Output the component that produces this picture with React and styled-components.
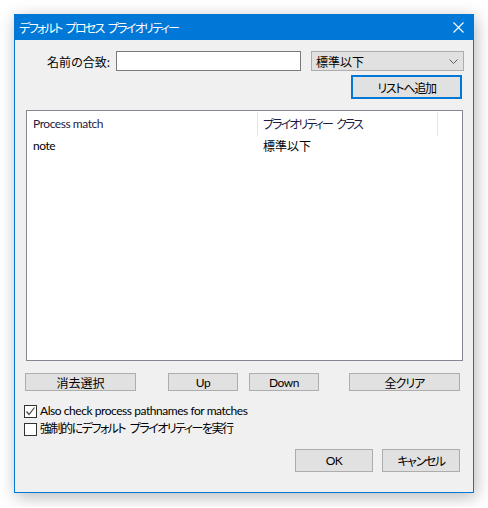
import styled, { createGlobalStyle } from "styled-components";

const GlobalStyle = createGlobalStyle`
  html, body {
    margin: 0;
    padding: 0;
    background: #ffffff;
  }
  body {
    padding: 14px;
    font-family: Lato, "Noto Sans CJK JP", sans-serif;
    font-size: 12px;
    font-feature-settings: "palt";
    color: #000000;
  }
`;

//styled-component
const Window = styled.div`
  width: 458px;
  height: 477px;
  border: 1px solid #0078d7;
  background: #f0f0f0;
  box-shadow: 2px 4px 16px rgba(0, 0, 0, 0.28);
  display: flex;
  flex-direction: column;
`;

const TitleBar = styled.div`
  height: 25px;
  background: #0078d7;
  color: #ffffff;
  display: flex;
  align-items: center;
  justify-content: space-between;
  padding: 0 9px 0 4px;
  font-family: "Noto Sans CJK JP", sans-serif;
`;

const Title = styled.span`
  line-height: 16px;
  margin-top: 1px;
  letter-spacing: -1.7px;
  word-spacing: 3px;
`;

const Body = styled.div`
  flex: 1;
  display: flex;
  flex-direction: column;
  padding: 11px 0 0 0;
`;

const Row = styled.div`
  display: flex;
  align-items: center;
  justify-content: ${(p) => p.$justify || "flex-start"};
  height: ${(p) => p.$h}px;
  margin-top: ${(p) => p.$mt || 0}px;
  padding: 0 ${(p) => p.$pr || 0}px 0 ${(p) => p.$pl || 0}px;
`;

const Latin = styled.span`
  letter-spacing: -0.45px;
`;

const Kana = styled.span`
  letter-spacing: ${(p) => p.$ls || -1.4}px;
  word-spacing: 3px;
`;

const Label = styled.span`
  margin-right: 6px;
  font-family: "Noto Sans CJK JP", sans-serif;
`;

const TextInput = styled.input`
  box-sizing: border-box;
  width: 185px;
  height: 20px;
  border: 1px solid #7a7a7a;
  background: #ffffff;
  outline: none;
  margin: 0 10px 0 0;
  padding: 0 3px;
  font: inherit;
`;

const Select = styled.div`
  box-sizing: border-box;
  width: 153px;
  height: 20px;
  border: 1px solid #adadad;
  background: #e1e1e1;
  display: flex;
  align-items: center;
  justify-content: space-between;
  padding: 0 5px 0 4px;
  font-family: "Noto Sans CJK JP", sans-serif;
`;

const Button = styled.div`
  box-sizing: border-box;
  width: ${(p) => p.$w}px;
  height: ${(p) => p.$h}px;
  margin-left: ${(p) => p.$ml || 0}px;
  border: ${(p) => (p.$focus ? "2px solid #0078d7" : "1px solid #adadad")};
  background: #e1e1e1;
  display: flex;
  align-items: center;
  justify-content: center;
`;

const ListView = styled.div`
  box-sizing: border-box;
  width: 437px;
  height: 251px;
  margin: 11px 0 0 11px;
  border: 1px solid #828790;
  background: #ffffff;
  display: flex;
  flex-direction: column;
`;

const ListRow = styled.div`
  display: flex;
  height: ${(p) => p.$h}px;
  align-items: center;
  color: ${(p) => (p.$header ? "#1c1c44" : "#000000")};
`;

const Cell = styled.div`
  box-sizing: border-box;
  width: ${(p) => p.$w}px;
  height: 100%;
  display: flex;
  align-items: center;
  padding-left: ${(p) => p.$pl}px;
  border-right: ${(p) => (p.$sep ? "1px solid #e5e5e5" : "none")};
  margin-top: ${(p) => (p.$sep ? 1 : 0)}px;
`;

const CheckRow = styled.label`
  display: flex;
  align-items: center;
  height: 13px;
  margin: ${(p) => p.$mt}px 0 0 9px;
`;

const Box = styled.span`
  box-sizing: border-box;
  width: 13px;
  height: 13px;
  border: 1px solid #333333;
  background: #ffffff;
  margin-right: 3px;
  display: flex;
  align-items: center;
  justify-content: center;
`;

const CheckText = styled.span`
  line-height: 13px;
  margin-top: -2px;
`;

function CloseIcon() {
  return (
    <svg width="11" height="11" viewBox="0 0 11 11">
      <path d="M0.5 0.5 L10.5 10.5 M10.5 0.5 L0.5 10.5" stroke="#ffffff" strokeWidth="1.1" />
    </svg>
  );
}

function Chevron() {
  return (
    <svg width="9" height="5" viewBox="0 0 9 5">
      <path d="M0.5 0.5 L4.5 4.5 L8.5 0.5" stroke="#606060" strokeWidth="1" fill="none" />
    </svg>
  );
}

function Check({ checked, children }) {
  return (
    <>
      <Box>
        {checked && (
          <svg width="11" height="11" viewBox="0 0 11 11">
            <path d="M1.5 5.5 L4 8.5 L9.5 1.5" stroke="#444444" strokeWidth="1.2" fill="none" />
          </svg>
        )}
      </Box>
      <CheckText>{children}</CheckText>
    </>
  );
}

export default function App() {
  return (
    <>
      <GlobalStyle />
      <Window>
        <TitleBar>
          <Title>デフォルト プロセス プライオリティー</Title>
          <CloseIcon />
        </TitleBar>
        <Body>
          <Row $h={20} $justify="flex-end" $pr={9}>
            <Label>名前の合致:</Label>
            <TextInput />
            <Select>
              <span>標準以下</span>
              <Chevron />
            </Select>
          </Row>
          <Row $h={24} $mt={4} $justify="flex-end" $pr={11}>
            <Button $w={111} $h={24} $focus>
              <Kana $ls={-1.3}>リストへ追加</Kana>
            </Button>
          </Row>
          <ListView>
            <ListRow $h={24} $header>
              <Cell $w={231} $pl={6} $sep>
                <Latin>Process match</Latin>
              </Cell>
              <Cell $w={180} $pl={5} $sep>
                <Kana $ls={-1.9}>プライオリティー クラス</Kana>
              </Cell>
            </ListRow>
            <ListRow $h={20}>
              <Cell $w={231} $pl={6}>
                <Latin>note</Latin>
              </Cell>
              <Cell $w={180} $pl={5}>
                標準以下
              </Cell>
            </ListRow>
          </ListView>
          <Row $h={18} $mt={12} $pl={10}>
            <Button $w={111} $h={18}>
              消去選択
            </Button>
            <Button $w={70} $h={18} $ml={32}>
              <Latin>Up</Latin>
            </Button>
            <Button $w={70} $h={18} $ml={11}>
              <Latin>Down</Latin>
            </Button>
            <Button $w={111} $h={18} $ml={30}>
              <Kana $ls={-1}>全クリア</Kana>
            </Button>
          </Row>
          <CheckRow $mt={14}>
            <Check checked>
              <Latin>Also check process pathnames for matches</Latin>
            </Check>
          </CheckRow>
          <CheckRow $mt={5}>
            <Check>
              <Kana $ls={-1.5}>強制的にデフォルト プライオリティーを実行</Kana>
            </Check>
          </CheckRow>
          <Row $h={23} $mt={13} $justify="flex-end" $pr={13}>
            <Button $w={78} $h={23}>
              <Latin>OK</Latin>
            </Button>
            <Button $w={78} $h={23} $ml={9}>
              <Kana>キャンセル</Kana>
            </Button>
          </Row>
        </Body>
      </Window>
    </>
  );
}
